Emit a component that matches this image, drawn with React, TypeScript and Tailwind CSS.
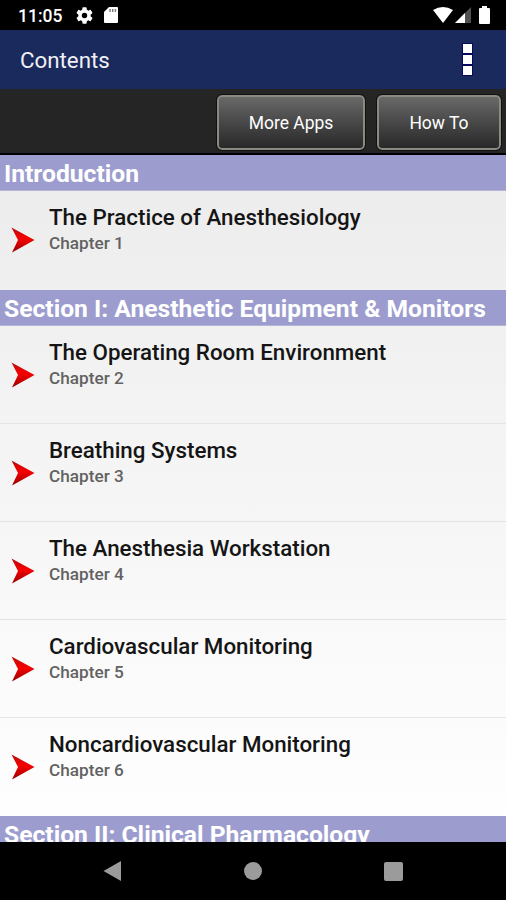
type Chapter = { title: string; label: string };

function SectionHeader({ title }: { title: string }) {
  return (
    <h2 className="h-9 shrink-0 border-b border-[#b4b5d7] bg-[#9c9dce] pl-1 text-[24.65px] leading-[38px] font-bold whitespace-nowrap text-white">
      {title}
    </h2>
  );
}

function ChapterRow({ title, label }: Chapter) {
  return (
    <li className="flex h-[98px] shrink-0 border-b border-[#e4e4e4] last:border-transparent">
      <svg className="mt-9 ml-[11px] h-[26px] w-6 shrink-0" viewBox="0 0 24 26">
        <defs>
          <linearGradient id="arrow" x1="0" y1="0" x2="0" y2="1">
            <stop offset="0" stopColor="#b80b0b" />
            <stop offset="0.45" stopColor="#f80000" />
            <stop offset="1" stopColor="#960000" />
          </linearGradient>
        </defs>
        <path d="M.5.5 23.5 13 1 25.5 7 13Z" fill="url(#arrow)" />
      </svg>
      <div className="ml-[14px] pt-3">
        <h3 className="text-[22.35px] leading-7 font-medium whitespace-nowrap text-[#151515]">{title}</h3>
        <p className="text-[17.2px] leading-6 font-medium text-[#626262]">{label}</p>
      </div>
    </li>
  );
}

function ToolButton({ label, className }: { label: string; className: string }) {
  return (
    <button
      className={`h-[55px] rounded-[5px] border-2 border-[#8a8a82] bg-linear-to-b from-[#696969] to-[#292929] pt-0.5 text-[17.5px] text-white outline outline-[#111] ${className}`}
    >
      {label}
    </button>
  );
}

const equipment: Chapter[] = [
  { title: "The Operating Room Environment", label: "Chapter 2" },
  { title: "Breathing Systems", label: "Chapter 3" },
  { title: "The Anesthesia Workstation", label: "Chapter 4" },
  { title: "Cardiovascular Monitoring", label: "Chapter 5" },
  { title: "Noncardiovascular Monitoring", label: "Chapter 6" },
];

export default function App() {
  return (
    <div className="flex h-[900px] w-[506px] flex-col overflow-hidden bg-black font-['Roboto',sans-serif]">
      <div className="flex h-[30px] shrink-0 items-center pr-4 pl-[18px] text-white">
        <span className="w-[58px] pt-0.5 text-[17.5px] font-medium">11:05</span>
        <svg className="h-[17px] w-[17px]" viewBox="2 2 20 20" fill="currentColor">
          <path d="M19.14 12.94c.04-.3.06-.61.06-.94s-.02-.64-.07-.94l2.03-1.58a.5.5 0 0 0 .12-.61l-1.92-3.32a.5.5 0 0 0-.59-.22l-2.39.96a7 7 0 0 0-1.62-.94l-.36-2.54a.5.5 0 0 0-.48-.41h-3.84a.5.5 0 0 0-.47.41l-.36 2.54c-.59.24-1.13.57-1.62.94l-2.39-.96a.5.5 0 0 0-.59.22L2.74 8.87a.5.5 0 0 0 .12.61l2.03 1.58a6 6 0 0 0 0 1.88l-2.03 1.58a.5.5 0 0 0-.12.61l1.92 3.32c.12.22.37.29.59.22l2.39-.96c.5.38 1.03.7 1.62.94l.36 2.54c.05.24.24.41.48.41h3.84c.24 0 .44-.17.47-.41l.36-2.54a7 7 0 0 0 1.62-.94l2.39.96c.22.08.47 0 .59-.22l1.92-3.32a.5.5 0 0 0-.12-.61ZM12 15.2a3.2 3.2 0 1 1 0-6.4 3.2 3.2 0 0 1 0 6.4Z" />
        </svg>
        <svg className="ml-[11px] h-4 w-[14px]" viewBox="0 0 14 16">
          <path d="M5 0h8q1 0 1 1v14q0 1-1 1H1q-1 0-1-1V5Z" fill="#fff" />
          <path d="M6 2v3M8.7 2v3M11.4 2v3" stroke="#777" strokeWidth="1.4" />
        </svg>
        <svg className="ml-auto h-4 w-5" viewBox="0 0 20 16">
          <path d="M0 3q10-6 20 0L10 16Z" fill="#fff" />
        </svg>
        <svg className="ml-0.5 h-4 w-4" viewBox="0 0 16 16">
          <path d="M16 0v16H0Z" fill="#505050" />
          <path d="M10 6v10H0Z" fill="#fff" />
        </svg>
        <svg className="ml-2 h-[18px] w-[11px]" viewBox="0 0 11 18">
          <path d="M3 0h5v2h2q1 0 1 1v14q0 1-1 1H1q-1 0-1-1V3q0-1 1-1h2Z" fill="#fff" />
        </svg>
      </div>

      <header className="flex h-[59px] shrink-0 items-center justify-between bg-[#1b2a5c] pr-[34px] pl-5">
        <h1 className="pt-[3px] text-[22.3px] text-[#f0f0f5]">Contents</h1>
        <div className="flex flex-col gap-[2px]">
          <i className="h-[9px] w-[9px] bg-white outline outline-[#08085c]" />
          <i className="h-[9px] w-[9px] bg-white outline outline-[#08085c]" />
          <i className="h-[9px] w-[9px] bg-white outline outline-[#08085c]" />
        </div>
      </header>

      <div className="flex h-[66px] shrink-0 justify-end gap-3 border-b-2 border-black bg-[#252525] pt-1.5 pr-[5px]">
        <ToolButton label="More Apps" className="w-[148px]" />
        <ToolButton label="How To" className="w-[124px]" />
      </div>

      <main className="flex h-[687px] shrink-0 flex-col overflow-hidden bg-linear-to-b from-[#ececec] to-white">
        <SectionHeader title="Introduction" />
        <ul className="h-[99px] shrink-0">
          <ChapterRow title="The Practice of Anesthesiology" label="Chapter 1" />
        </ul>
        <SectionHeader title="Section I: Anesthetic Equipment & Monitors" />
        <ul className="shrink-0">
          {equipment.map((c) => (
            <ChapterRow key={c.label} {...c} />
          ))}
        </ul>
        <SectionHeader title="Section II: Clinical Pharmacology" />
      </main>

      <nav className="flex h-[58px] shrink-0 items-center justify-between pr-[103px] pl-[103px]">
        <svg className="h-5 w-[19px]" viewBox="0 0 19 20">
          <path d="M.5 10 18 0v20Z" fill="#9b9b9b" />
        </svg>
        <div className="h-[18px] w-[18px] rounded-full bg-[#9b9b9b]" />
        <div className="h-[19px] w-[19px] rounded-[2px] bg-[#9b9b9b]" />
      </nav>
    </div>
  );
}
